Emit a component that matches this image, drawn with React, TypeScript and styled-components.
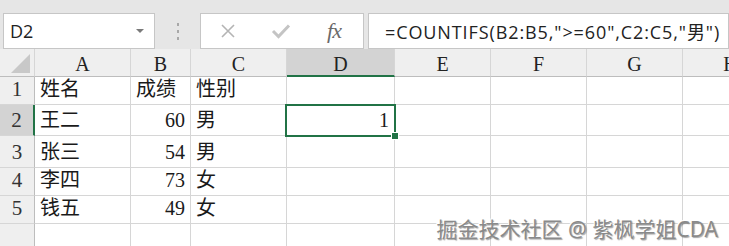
import * as React from 'react';
import styled, {createGlobalStyle, css} from 'styled-components';

const GlobalStyle = createGlobalStyle`
  html, body {
    margin: 0;
    padding: 0;
    background: #ffffff;
  }
  #root {
    width: 729px;
    height: 246px;
    overflow: hidden;
  }
`;

const columns = [
  {key: 'A', width: 96},
  {key: 'B', width: 60},
  {key: 'C', width: 96},
  {key: 'D', width: 108},
  {key: 'E', width: 96},
  {key: 'F', width: 96},
  {key: 'G', width: 96},
  {key: 'H', width: 96},
];

type Cell = {text: string; num?: boolean};

const rows: {id: number; height: number; cells: Cell[]}[] = [
  {id: 1, height: 28, cells: [{text: '姓名'}, {text: '成绩'}, {text: '性别'}]},
  {id: 2, height: 31, cells: [{text: '王二'}, {text: '60', num: true}, {text: '男'}]},
  {id: 3, height: 32, cells: [{text: '张三'}, {text: '54', num: true}, {text: '男'}]},
  {id: 4, height: 28, cells: [{text: '李四'}, {text: '73', num: true}, {text: '女'}]},
  {id: 5, height: 28, cells: [{text: '钱五'}, {text: '49', num: true}, {text: '女'}]},
  {id: 6, height: 28, cells: []},
];

const App = () => {
  return (
    <Screen>
      <GlobalStyle />
      <FormulaBar>
        <NameBox>
          <NameText>D2</NameText>
          <DropArrow />
        </NameBox>
        <Grip>
          <GripDot />
          <GripDot />
          <GripDot />
        </Grip>
        <ButtonBox>
          <BarButton>
            <svg width="16" height="16" viewBox="0 0 16 16">
              <path d="M2 2 L14 14 M14 2 L2 14" stroke="#b4b4b4" strokeWidth="1.6" fill="none" />
            </svg>
          </BarButton>
          <BarButton>
            <svg width="20" height="16" viewBox="0 0 20 16">
              <path d="M2 8 L7.5 13.5 L18 2.5" stroke="#c4c4c4" strokeWidth="3" fill="none" />
            </svg>
          </BarButton>
          <BarButton>
            <Fx>fx</Fx>
          </BarButton>
        </ButtonBox>
        <FormulaInput>=COUNTIFS(B2:B5,"&gt;=60",C2:C5,"男")</FormulaInput>
      </FormulaBar>

      <Sheet>
        <HeaderRow>
          <Corner>
            <CornerTriangle />
          </Corner>
          {columns.map((c) => (
            <ColHeader key={c.key} width={c.width} active={c.key === 'D'}>
              {c.key}
            </ColHeader>
          ))}
        </HeaderRow>
        {rows.map((r) => (
          <Row key={r.id} height={r.height}>
            <RowHeader active={r.id === 2}>{r.id > 5 ? '' : r.id}</RowHeader>
            {columns.map((c, i) => {
              const cell = r.cells[i];
              let text = cell ? cell.text : '';
              let num = cell ? !!cell.num : false;
              if (r.id === 2 && c.key === 'D') {
                text = '1';
                num = true;
              }
              return (
                <DataCell key={c.key} width={c.width} num={num}>
                  {text}
                </DataCell>
              );
            })}
          </Row>
        ))}
        <Selection>
          <FillHandle />
        </Selection>
        <Watermark>掘金技术社区 @ 紫枫学姐CDA</Watermark>
      </Sheet>
    </Screen>
  );
};

const Screen = styled.div`
  width: 729px;
  height: 246px;
  background: #e6e6e6;
  display: flex;
  flex-direction: column;
  overflow: hidden;
`;

const FormulaBar = styled.div`
  height: 63px;
  display: flex;
  align-items: flex-start;
  padding: 13px 0 0 3px;
  box-sizing: border-box;
`;

const boxBase = css`
  height: 36px;
  box-sizing: border-box;
  background: #ffffff;
  border: 1px solid #c6c6c6;
  display: flex;
  align-items: center;
`;

const NameBox = styled.div`
  ${boxBase};
  width: 152px;
  padding: 0 10px 0 6px;
  justify-content: space-between;
`;

const NameText = styled.span`
  font-family: 'Open Sans', 'Noto Sans', sans-serif;
  font-size: 18px;
  color: #222222;
`;

const DropArrow = styled.span`
  width: 0;
  height: 0;
  border-left: 4px solid transparent;
  border-right: 4px solid transparent;
  border-top: 4px solid #7a7a7a;
`;

const Grip = styled.div`
  width: 45px;
  height: 36px;
  display: flex;
  flex-direction: column;
  align-items: center;
  justify-content: center;
  gap: 4px;
`;

const GripDot = styled.span`
  width: 2px;
  height: 3px;
  background: #a8a8a8;
`;

const ButtonBox = styled.div`
  ${boxBase};
  width: 164px;
  padding-left: 9px;
  gap: 17px;
`;

const BarButton = styled.span`
  width: 36px;
  display: flex;
  justify-content: center;
  align-items: center;
`;

const Fx = styled.span`
  font-family: 'Liberation Serif', serif;
  font-style: italic;
  font-size: 22px;
  color: #6a6a6a;
  letter-spacing: -1px;
`;

const FormulaInput = styled.div`
  ${boxBase};
  margin-left: 4px;
  flex: 1;
  padding-left: 16px;
  font-family: 'Open Sans', 'Noto Sans', 'Noto Sans CJK SC', sans-serif;
  font-size: 18px;
  letter-spacing: 0.9px;
  color: #222222;
  white-space: nowrap;
`;

const Sheet = styled.div`
  position: relative;
  flex: 1;
  background: #ffffff;
`;

const gridLine = '#d6d6d6';

const HeaderRow = styled.div`
  display: flex;
  height: 28px;
  background: #efefef;
`;

const Corner = styled.div`
  width: 35px;
  flex: none;
  box-sizing: border-box;
  border-right: 1px solid ${gridLine};
  border-bottom: 1px solid #bdbdbd;
  position: relative;
`;

const CornerTriangle = styled.span`
  position: absolute;
  right: 4px;
  bottom: 3px;
  width: 0;
  height: 0;
  border-left: 19px solid transparent;
  border-bottom: 19px solid #c8c8c8;
`;

const ColHeader = styled.div<{width: number; active?: boolean}>`
  width: ${(p) => p.width}px;
  flex: none;
  box-sizing: border-box;
  border-right: 1px solid ${gridLine};
  border-bottom: ${(p) => (p.active ? '2px solid #217346' : '1px solid #bdbdbd')};
  background: ${(p) => (p.active ? '#d3d3d3' : 'transparent')};
  display: flex;
  justify-content: center;
  align-items: flex-end;
  padding-bottom: ${(p) => (p.active ? 1 : 2)}px;
  font-family: 'Liberation Serif', serif;
  font-size: 20px;
  line-height: 20px;
  color: #222222;
`;

const Row = styled.div<{height: number}>`
  display: flex;
  height: ${(p) => p.height}px;
`;

const RowHeader = styled.div<{active?: boolean}>`
  width: 35px;
  flex: none;
  box-sizing: border-box;
  background: ${(p) => (p.active ? '#d3d3d3' : '#efefef')};
  border-right: ${(p) => (p.active ? '2px solid #217346' : '1px solid #bdbdbd')};
  border-bottom: 1px solid ${gridLine};
  display: flex;
  justify-content: center;
  align-items: flex-end;
  padding-bottom: 4px;
  font-family: 'Liberation Serif', serif;
  font-size: 21px;
  line-height: 21px;
  color: #333333;
`;

const DataCell = styled.div<{width: number; num?: boolean}>`
  width: ${(p) => p.width}px;
  flex: none;
  box-sizing: border-box;
  border-right: 1px solid ${gridLine};
  border-bottom: 1px solid ${gridLine};
  display: flex;
  align-items: flex-end;
  justify-content: ${(p) => (p.num ? 'flex-end' : 'flex-start')};
  padding: 0 ${(p) => (p.num ? 5 : 0)}px 4px ${(p) => (p.num ? 0 : 5)}px;
  font-family: 'Liberation Serif', 'Noto Sans CJK SC', serif;
  font-size: 20px;
  line-height: 21px;
  color: #1a1a1a;
  white-space: nowrap;
`;

const Selection = styled.div`
  position: absolute;
  left: 285px;
  top: 55px;
  width: 111px;
  height: 33px;
  box-sizing: border-box;
  border: 2px solid #217346;
  pointer-events: none;
`;

const FillHandle = styled.span`
  position: absolute;
  right: -5px;
  bottom: -5px;
  width: 6px;
  height: 6px;
  background: #217346;
  border: 1px solid #ffffff;
`;

const Watermark = styled.div`
  position: absolute;
  right: 11px;
  bottom: 11px;
  font-family: 'Noto Sans', 'Noto Sans CJK SC', sans-serif;
  font-size: 21px;
  line-height: 24px;
  color: #8a8a8a;
  text-shadow: -1px -1px 0 #ffffff, 1px 1px 1px rgba(0, 0, 0, 0.35);
  white-space: nowrap;
  pointer-events: none;
`;

export default App;
